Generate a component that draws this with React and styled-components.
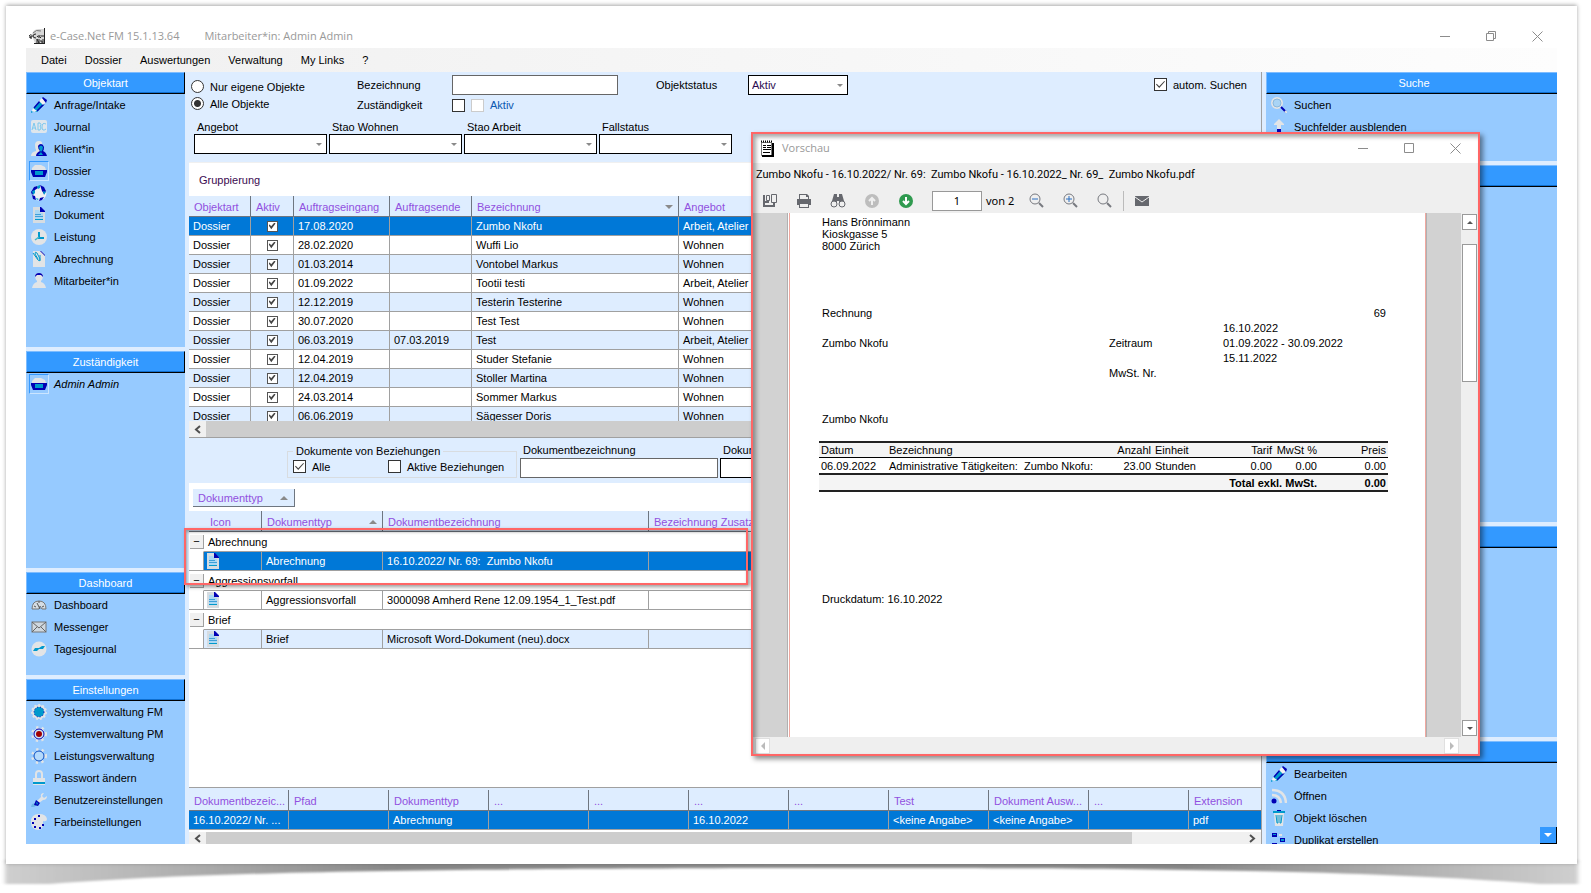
import React from "react"
import styled, { createGlobalStyle, css } from "styled-components"

const navy = "#0000b4"
const teal = "#0099cc"
const pale = "#e2e4e6"

const ICONS = {
  pencil: (
    <>
      <path d="M2 12l7-8 4 4-7 7-4 0z" fill={teal} />
      <path d="M3 11l6-7M6 14l7-7" stroke={navy} strokeWidth="1.5" />
      <path d="M8 4l3-3 4 4-3 3z" fill="#f2f2f2" />
      <path d="M11 1l1-1 4 3-1 3z" fill={navy} />
      <path d="M2 11l-1 3 2 1 3-1z" fill="#f2f2f2" />
      <path d="M0 16v-2l2 1z" fill={teal} />
    </>
  ),
  abc: (
    <>
      <rect x="0" y="1" width="16" height="13" rx="2" fill="#dfe6ec" />
      <path
        d="M1 11l2-7 2 7M2 9h2M7 4v7h2q2-2 0-4q2-1 0-3zM15 5q-4-2-4 3t4 2"
        fill="none"
        stroke="#7cc8ee"
      />
    </>
  ),
  client: (
    <>
      <path d="M4 4q0-4 4-4t3 4q0 3-2 5v2l1 4H0q0-4 5-5V9Q4 7 4 4z" fill={pale} />
      <path d="M7 5q1-2 3-2t3 3q0 3-1 4 3 1 4 5H5q0-3 4-5-2-2-2-5z" fill={navy} />
      <path d="M8 6q2-3 4 0 0 3-2 5-2-2-2-5zM7 14l3-3 2 3z" fill={teal} />
    </>
  ),
  folder: (
    <>
      <path d="M1 7V5l3-3h6l4 2 1 3z" fill={pale} />
      <path d="M0 7h16v2l-2 5H2L0 9z" fill={navy} />
      <path d="M4 8h8v4H4z" fill={teal} />
    </>
  ),
  globe: (
    <>
      <circle cx="8" cy="8" r="7.5" fill="#eef0f2" />
      <path d="M3 2l3-1 1 2-3 2-1 3-2 2-1-3zM9 0l4 2 2 4-2 3-2-3-1-3zM1 10l3 1 1 4-3-1zM9 13l4-1-2 3-3 1z" fill={navy} />
      <path d="M6 1l3-1v3L7 4zM1 6l3-1v3l-2 2zM12 6l3 1-2 3zM5 13l3 1-2 1z" fill={teal} />
    </>
  ),
  doc: (
    <>
      <path d="M2 0h7l5 4v12H2z" fill="#d6dce1" />
      <path d="M4 3h4l2 3h2v6H4z" fill="#a9d8f4" />
      <path d="M9 0h1l4 4v1H9z" fill={navy} />
      <path d="M4 7.500h6M4 9.500h8" stroke="#3f9fd8" />
      <path d="M4 12.500h8" stroke={teal} />
    </>
  ),
  clock: (
    <>
      <circle cx="8" cy="8" r="8" fill={pale} />
      <path d="M8 3v6h5" stroke={teal} strokeWidth="2" fill="none" />
      <path d="M4 11l4-3" stroke="#40b8c8" strokeWidth="1.5" />
    </>
  ),
  clip: (
    <>
      <path d="M2 0h8l4 4v12H2z" fill={pale} />
      <path d="M9 0h1l4 4v1z" fill={navy} />
      <path
        d="M2 2l5 7q2 2 2-1L6 2Q4 0 4 3l3 5M9 10V4"
        fill="none"
        stroke={teal}
      />
    </>
  ),
  person: (
    <>
      <path d="M4 3q0-3 4-3t4 3q0 3-2 5v1q4 1 5 6H1q1-5 5-6V8Q4 6 4 3z" fill={pale} />
      <path d="M4 4q0-4 4-4t4 4l-2-2H6z" fill={navy} />
    </>
  ),
  gauge: (
    <>
      <path d="M1 12q0-8 7-8t7 8h-4l-2-3-1 3z" fill="#d5dde4" stroke="#777" />
      <path d="M9 12L6 6M3 9l2 1M8 4v2M13 9l-2 1" stroke="#555" fill="none" />
    </>
  ),
  mail: (
    <>
      <rect x="1" y="3" width="14" height="10" fill="#cfd8df" stroke="#777" />
      <path d="M1 3l7 6 7-6M1 13l5-5M15 13l-5-5" stroke="#666" fill="none" />
    </>
  ),
  daily: (
    <>
      <circle cx="8" cy="8" r="7.5" fill={pale} />
      <path d="M2 10l2-3h4l3-2h3l-2 3H8l-2 2z" fill={teal} />
    </>
  ),
  gearFull: (
    <>
      <circle cx="8" cy="8" r="7" fill={pale} stroke={pale} strokeWidth="2" strokeDasharray="2 2" />
      <circle cx="8" cy="8" r="5" fill={teal} stroke={navy} strokeDasharray="1 2" />
    </>
  ),
  gearRed: (
    <>
      <circle cx="8" cy="8" r="6" fill={pale} stroke={pale} strokeWidth="4" strokeDasharray="2 3" />
      <circle cx="8" cy="8" r="5" fill="#cfe6f6" stroke={navy} />
      <circle cx="8" cy="8" r="3" fill="#a00000" />
    </>
  ),
  gearOpen: (
    <>
      <circle cx="8" cy="8" r="6" fill="none" stroke={pale} strokeWidth="4" strokeDasharray="2 3" />
      <circle cx="8" cy="8" r="5" fill="#b5dafc" stroke="#0a4cc0" />
    </>
  ),
  lock: (
    <>
      <path d="M5 8V4q0-3 3-3t3 3v4" fill="none" stroke={pale} strokeWidth="2" />
      <path d="M2 8h12v7H2z" fill={pale} />
      <path d="M2 12h12v2H2z" fill={teal} />
    </>
  ),
  wrench: (
    <>
      <path d="M6 9l4-4q-1-4 3-4l-2 3 2 2 3-2q0 4-4 4l-4 3z" fill={pale} />
      <path d="M0 15l1-3 3-1 2 2-3 2z" fill="#6fb6e6" />
      <path d="M5 8l4 3-2 3-4-1z" fill={navy} />
      <path d="M5 10l2 1-1 2z" fill={teal} />
    </>
  ),
  palette: (
    <>
      <path d="M8 0q7 0 8 5 0 3-4 2 1 8-4 9-8 0-8-8t8-8z" fill={pale} />
      <path d="M3 4h2v2H3zM1 8h2v2H1zM3 12h2v2H3zM8 13h2v2H8zM7 1h2v2H7zM11 10h2v2h-2z" fill={navy} />
    </>
  ),
  search: (
    <>
      <circle cx="6" cy="6" r="5" fill="#a9d4f5" stroke={pale} strokeWidth="2" />
      <circle cx="6" cy="6" r="4" fill="none" stroke="#8bb8dc" />
      <path d="M10 10l5 5" stroke={navy} strokeWidth="2" />
      <path d="M14 14l2 2" stroke={pale} strokeWidth="2" />
    </>
  ),
  up: (
    <>
      <path d="M8 0l5 5v1h-3v4H6V6H3V5z" fill={pale} />
      <path d="M6 10h4v4H6z" fill={navy} />
    </>
  ),
  feed: (
    <>
      <path d="M1 2q13 0 14 13M1 7q8 0 9 8" fill="none" stroke={pale} strokeWidth="2.500" />
      <circle cx="3" cy="13" r="2.5" fill={navy} />
    </>
  ),
  trash: (
    <>
      <path d="M2 2h12" stroke={teal} strokeWidth="2" />
      <path d="M6 0h4v1H6z" fill={navy} />
      <path d="M3 3h10l-1 13H4z" fill={pale} />
      <path d="M5 5l1 8h1V5M11 5l-1 8H9V5" stroke={teal} fill="none" />
    </>
  ),
  nodes: (
    <>
      <path d="M1 1h5v4H1zM9 6h5v4H9zM1 11h5v4H1z" fill={navy} />
      <path d="M2 2h3v1H2zM10 7h3v2h-3zM2 12h3v2H2z" fill={teal} />
      <path d="M8 3h3M8 13h3" stroke={pale} strokeWidth="2" />
    </>
  ),
}

const Icon = ({ name, size = 16 }) => (
  <svg width={size} height={size} viewBox="0 0 16 16" aria-hidden="true">
    {ICONS[name]}
  </svg>
)

const Triangle = ({ up, color = "#8a8a8a", w = 8 }) => (
  <svg width={w} height={w / 2} viewBox="0 0 8 4" aria-hidden="true">
    <path d={up ? "M0 4l4-4 4 4z" : "M0 0l4 4 4-4z"} fill={color} />
  </svg>
)

const Chevron = ({ right }) => (
  <svg width="7" height="9" viewBox="0 0 7 9" aria-hidden="true">
    <path
      d={right ? "M1 1l4 3.5L1 8" : "M6 1L2 4.5 6 8"}
      fill="none"
      stroke="#505050"
      strokeWidth="2"
    />
  </svg>
)

const Controls = ({ restore }) => (
  <ControlRow>
    <PlainButton aria-label="Minimieren">
      <svg width="11" height="11">
        <path d="M0 5.5h10" stroke="#8c8c8c" />
      </svg>
    </PlainButton>
    <PlainButton aria-label="Maximieren">
      <svg width="11" height="11" fill="none" stroke="#8c8c8c">
        {restore ? (
          <path d="M.5 2.5h7v7h-7zM2.5 2.5v-2h7v7h-2" />
        ) : (
          <path d="M.5 .5h9v9h-9z" />
        )}
      </svg>
    </PlainButton>
    <PlainButton aria-label="Schliessen">
      <svg width="11" height="11">
        <path d="M.5 .5l10 10M10.5 .5l-10 10" stroke="#8c8c8c" />
      </svg>
    </PlainButton>
  </ControlRow>
)

const Dropdown = ({ label, value = "", hideLabel }) => (
  <Field>
    {!hideLabel && <span>{label}</span>}
    <SelectBox>
      <select aria-label={label} defaultValue={value}>
        <option>{value}</option>
      </select>
      <Triangle w={6} />
    </SelectBox>
  </Field>
)

const Section = ({ title, items = [], height, open }) => (
  <Panel $height={height}>
    <PanelTitle $open={open}>{title}</PanelTitle>
    {items.map(([icon, text, active, italic]) => (
      <PanelItem key={text} $italic={italic}>
        <IconFrame $active={active}>
          <Icon name={icon} />
        </IconFrame>
        {text}
      </PanelItem>
    ))}
  </Panel>
)

const MENU = ["Datei", "Dossier", "Auswertungen", "Verwaltung", "My Links", "?"]

const OBJEKTART = [
  ["pencil", "Anfrage/Intake"],
  ["abc", "Journal"],
  ["client", "Klient*in"],
  ["folder", "Dossier", true],
  ["globe", "Adresse"],
  ["doc", "Dokument"],
  ["clock", "Leistung"],
  ["clip", "Abrechnung"],
  ["person", "Mitarbeiter*in"],
]
const DASHBOARD = [
  ["gauge", "Dashboard"],
  ["mail", "Messenger"],
  ["daily", "Tagesjournal"],
]
const SETTINGS = [
  ["gearFull", "Systemverwaltung FM"],
  ["gearRed", "Systemverwaltung PM"],
  ["gearOpen", "Leistungsverwaltung"],
  ["lock", "Passwort ändern"],
  ["wrench", "Benutzereinstellungen"],
  ["palette", "Farbeinstellungen"],
]
const SEARCH = [
  ["search", "Suchen"],
  ["up", "Suchfelder ausblenden"],
]
const ACTIONS = [
  ["pencil", "Bearbeiten"],
  ["feed", "Öffnen"],
  ["trash", "Objekt löschen"],
  ["nodes", "Duplikat erstellen"],
]

const DOSSIERS = [
  ["17.08.2020", "", "Zumbo Nkofu", "Arbeit, Atelier"],
  ["28.02.2020", "", "Wuffi Lio", "Wohnen"],
  ["01.03.2014", "", "Vontobel Markus", "Wohnen"],
  ["01.09.2022", "", "Tootii testi", "Arbeit, Atelier"],
  ["12.12.2019", "", "Testerin Testerine", "Wohnen"],
  ["30.07.2020", "", "Test Test", "Wohnen"],
  ["06.03.2019", "07.03.2019", "Test", "Arbeit, Atelier"],
  ["12.04.2019", "", "Studer Stefanie", "Wohnen"],
  ["12.04.2019", "", "Stoller Martina", "Wohnen"],
  ["24.03.2014", "", "Sommer Markus", "Wohnen"],
  ["06.06.2019", "", "Sägesser Doris", "Wohnen"],
]

const DOCUMENTS = [
  ["Abrechnung", "16.10.2022/ Nr. 69:  Zumbo Nkofu", "selected"],
  ["Aggressionsvorfall", "3000098 Amherd Rene 12.09.1954_1_Test.pdf"],
  ["Brief", "Microsoft Word-Dokument (neu).docx", "odd"],
]

const PROPERTIES = [
  ["Dokumentbezeic...", "16.10.2022/ Nr. ..."],
  ["Pfad", ""],
  ["Dokumenttyp", "Abrechnung"],
  ["...", ""],
  ["...", ""],
  ["...", "16.10.2022"],
  ["...", ""],
  ["Test", "<keine Angabe>"],
  ["Dokument Ausw...", "<keine Angabe>"],
  ["...", ""],
  ["Extension", "pdf"],
]

const Cols = ({ widths }) => (
  <colgroup>
    {widths.map((w, i) => (
      <col key={i} width={w || undefined} />
    ))}
  </colgroup>
)

const SearchPanel = () => (
  <Search>
    <SearchTop>
      <RadioColumn>
        <Choice>
          <Radio name="scope" />
          Nur eigene Objekte
        </Choice>
        <Choice>
          <Radio name="scope" defaultChecked />
          Alle Objekte
        </Choice>
      </RadioColumn>
      <LabelColumn>
        <label htmlFor="bezeichnung">Bezeichnung</label>
        <label htmlFor="zustaendig">Zuständigkeit</label>
      </LabelColumn>
      <InputColumn>
        <TextBox id="bezeichnung" />
        <CheckPair>
          <Check id="zustaendig" />
          <Choice $blue>
            <Check disabled />
            Aktiv
          </Choice>
        </CheckPair>
      </InputColumn>
      <StatusLabel>Objektstatus</StatusLabel>
      <StatusBox>
        <Dropdown label="Objektstatus" value="Aktiv" hideLabel />
      </StatusBox>
      <AutoSearch>
        <Check defaultChecked />
        autom. Suchen
      </AutoSearch>
    </SearchTop>
    <FilterRow>
      <Dropdown label="Angebot" />
      <Dropdown label="Stao Wohnen" />
      <Dropdown label="Stao Arbeit" />
      <Dropdown label="Fallstatus" />
    </FilterRow>
  </Search>
)

const DossierGrid = () => (
  <>
    <GroupBar>Gruppierung</GroupBar>
    <GridClip>
      <Grid>
        <Cols widths={[62, 43, 96, 82, 207, 0]} />
        <thead>
          <tr>
            <th>Objektart</th>
            <th>Aktiv</th>
            <th>Auftragseingang</th>
            <th>Auftragsende</th>
            <th>
              <HeadFlex>
                Bezeichnung <Triangle />
              </HeadFlex>
            </th>
            <th>Angebot</th>
          </tr>
        </thead>
        <tbody>
          {DOSSIERS.map(([start, end, name, offer], i) => (
            <GridRow key={name} $selected={i === 0} $odd={i % 2 === 0}>
              <td>Dossier</td>
              <CenterCell>
                <Check $small defaultChecked aria-label={`Aktiv ${name}`} />
              </CenterCell>
              <td>{start}</td>
              <td>{end}</td>
              <td>{name}</td>
              <td>{offer}</td>
            </GridRow>
          ))}
        </tbody>
      </Grid>
    </GridClip>
    <ScrollBar $line>
      <PlainButton aria-label="Nach links">
        <Chevron />
      </PlainButton>
      <ScrollThumb />
    </ScrollBar>
  </>
)

const DocumentFilter = () => (
  <DocFilter>
    <Relations>
      <legend>Dokumente von Beziehungen</legend>
      <Choice>
        <Check defaultChecked />
        Alle
      </Choice>
      <Choice>
        <Check />
        Aktive Beziehungen
      </Choice>
    </Relations>
    <NameField>
      <span>Dokumentbezeichnung</span>
      <TextBox />
    </NameField>
    <TypeField>
      <Dropdown label="Dokumenttyp" />
    </TypeField>
  </DocFilter>
)

const DocumentGrid = () => (
  <DocArea>
    <GroupChipBar>
      <GroupChip>
        Dokumenttyp <Triangle up />
      </GroupChip>
    </GroupChipBar>
    <Grid>
      <Cols widths={[15, 58, 121, 266, 0]} />
      <thead>
        <tr>
          <IconHead colSpan={2}>Icon</IconHead>
          <th>
            <HeadFlex>
              Dokumenttyp <Triangle up />
            </HeadFlex>
          </th>
          <th>Dokumentbezeichnung</th>
          <th>Bezeichnung Zusatz</th>
        </tr>
      </thead>
      {DOCUMENTS.map(([type, name, state]) => (
        <tbody key={type}>
          <tr>
            <GroupCell colSpan={5}>
              <GroupFlex>
                <Collapse aria-label={`${type} zuklappen`}>−</Collapse>
                {type}
              </GroupFlex>
            </GroupCell>
          </tr>
          <DocRow $selected={state === "selected"} $odd={state === "odd"}>
            <td />
            <IconCell>
              <Icon name="doc" />
            </IconCell>
            <td>{type}</td>
            <td>{name}</td>
            <td />
          </DocRow>
        </tbody>
      ))}
    </Grid>
  </DocArea>
)

const PropertyGrid = () => (
  <PropArea>
    <Grid>
      <Cols widths={[100, 100, 100, 100, 100, 100, 100, 100, 100, 100, 0]} />
      <thead>
        <tr>
          {PROPERTIES.map(([head], i) => (
            <th key={i}>{head}</th>
          ))}
        </tr>
      </thead>
      <tbody>
        <GridRow $selected>
          {PROPERTIES.map(([, value], i) => (
            <td key={i}>{value}</td>
          ))}
        </GridRow>
      </tbody>
    </Grid>
    <ScrollBar $short>
      <PlainButton aria-label="Nach links">
        <Chevron />
      </PlainButton>
      <ScrollThumb />
      <ScrollRest />
      <PlainButton aria-label="Nach rechts">
        <Chevron right />
      </PlainButton>
    </ScrollBar>
  </PropArea>
)

const Lens = ({ children }) => (
  <svg width="16" height="16" fill="none" stroke="#77797f">
    <circle cx="6" cy="6" r="5" />
    <path d="M10 10l4 4" strokeWidth="2" />
    {children}
  </svg>
)

const PreviewToolbar = () => (
  <Toolbar>
    <PlainButton aria-label="Seitenleiste">
      <svg width="16" height="16" fill="none" stroke="#66686e">
        <path d="M2 2v11h10v-3" strokeWidth="2" />
        <path d="M4.5 2.5h3v5h-3zM9.5 1.5h5v8h-5z" />
        <path d="M1 9h6" strokeWidth="2" />
      </svg>
    </PlainButton>
    <PlainButton aria-label="Drucken">
      <svg width="16" height="16" fill="#66686e">
        <path d="M3 1h8l2 2v3h-1V4h-2V2H4v4H3z" />
        <path d="M1 6h14v6h-2V9H3v3H1z" />
        <path d="M3 9h10v6H3zm1 2v3h8v-3z" fillRule="evenodd" />
      </svg>
    </PlainButton>
    <PlainButton aria-label="Suchen">
      <svg width="16" height="16" fill="#66686e">
        <path d="M4 1h3v3h2V1h3l2 7q1 2 0 4H9V8H7v4H2q-1-2 0-4z" />
        <circle cx="4" cy="11" r="3" fill="#efefef" stroke="#66686e" />
        <circle cx="12" cy="11" r="3" fill="#efefef" stroke="#66686e" />
      </svg>
    </PlainButton>
    <PlainButton aria-label="Vorherige Seite">
      <svg width="16" height="16">
        <circle cx="8" cy="8" r="7" fill="#bdbdbd" />
        <path d="M8 12V5M5 8l3-3 3 3" stroke="#efefef" strokeWidth="2" fill="none" />
      </svg>
    </PlainButton>
    <PlainButton aria-label="Nächste Seite">
      <svg width="16" height="16">
        <circle cx="8" cy="8" r="7" fill="#2f9a4f" />
        <path d="M8 4v7M5 8l3 3 3-3" stroke="#fff" strokeWidth="2" fill="none" />
      </svg>
    </PlainButton>
    <PageNumber aria-label="Seite" defaultValue="1" />
    <PageCount>von 2</PageCount>
    <PlainButton aria-label="Verkleinern">
      <Lens>
        <path d="M3 6h6" stroke="#2a6fc0" />
      </Lens>
    </PlainButton>
    <PlainButton aria-label="Vergrössern">
      <Lens>
        <path d="M3 6h6M6 3v6" stroke="#2a6fc0" />
      </Lens>
    </PlainButton>
    <PlainButton aria-label="Zoom">
      <Lens />
    </PlainButton>
    <Divider />
    <PlainButton aria-label="Senden">
      <svg width="16" height="16">
        <path d="M1 3h14v10H1z" fill="#66686e" />
        <path d="M1 4l7 5 7-5" stroke="#efefef" fill="none" />
      </svg>
    </PlainButton>
  </Toolbar>
)

const Invoice = () => (
  <Sheet>
    <address>
      Hans Brönnimann
      <br />
      Kioskgasse 5
      <br />
      8000 Zürich
    </address>
    <Meta>
      <span>Rechnung</span>
      <span />
      <RightText>69</RightText>
      <span />
      <span />
      <span>16.10.2022</span>
      <span>Zumbo Nkofu</span>
      <span>Zeitraum</span>
      <span>01.09.2022 - 30.09.2022</span>
      <span />
      <span />
      <span>15.11.2022</span>
      <span />
      <span>MwSt. Nr.</span>
    </Meta>
    <SheetLine>Zumbo Nkofu</SheetLine>
    <InvoiceTable>
      <Cols widths={[68, 0, 46, 67, 54, 45, 69]} />
      <thead>
        <tr>
          <th>Datum</th>
          <th>Bezeichnung</th>
          <NumHead>Anzahl</NumHead>
          <th>Einheit</th>
          <NumHead>Tarif</NumHead>
          <NumHead>MwSt %</NumHead>
          <NumHead>Preis</NumHead>
        </tr>
      </thead>
      <tbody>
        <tr>
          <td>06.09.2022</td>
          <td>Administrative Tätigkeiten:&nbsp; Zumbo Nkofu:</td>
          <NumCell>23.00</NumCell>
          <td>Stunden</td>
          <NumCell>0.00</NumCell>
          <NumCell>0.00</NumCell>
          <NumCell>0.00</NumCell>
        </tr>
      </tbody>
      <tfoot>
        <tr>
          <NumCell colSpan={6}>Total exkl. MwSt.</NumCell>
          <NumCell>0.00</NumCell>
        </tr>
      </tfoot>
    </InvoiceTable>
    <PrintDate>Druckdatum: 16.10.2022</PrintDate>
  </Sheet>
)

const Preview = () => (
  <PreviewWindow>
    <PreviewTitle>
      <svg width="14" height="17" viewBox="0 0 14 17">
        <path d="M1.5 2.5h10v13h-10z" fill="#fff" stroke="#777" />
        <path d="M13 3v13H2" stroke="#000" strokeWidth="2" fill="none" />
        <path d="M1 1.5h12" stroke="#000" strokeWidth="2" strokeDasharray="1 1" />
        <path d="M3 5.5h3M7 5.500h4M3 7.5h3M7 7.500h4M3 9.5h8M3 12.500h7" stroke="#000" />
      </svg>
      Vorschau
      <Controls />
    </PreviewTitle>
    <FilePath>
      Zumbo Nkofu - 16.10.2022/ Nr. 69:&nbsp; Zumbo Nkofu - 16.10.2022_ Nr.
      69_&nbsp; Zumbo Nkofu.pdf
    </FilePath>
    <PreviewToolbar />
    <Viewer>
      <SheetArea>
        <Invoice />
      </SheetArea>
      <VerticalBar>
        <ArrowButton aria-label="Nach oben">
          <Triangle up w={6} color="#555" />
        </ArrowButton>
        <VerticalThumb />
        <ArrowButton aria-label="Nach unten">
          <Triangle w={6} color="#555" />
        </ArrowButton>
      </VerticalBar>
    </Viewer>
    <HorizontalBar>
      <ArrowButton $off aria-label="Nach links">
        <svg width="4" height="8">
          <path d="M4 0v8L0 4z" fill="#bbb" />
        </svg>
      </ArrowButton>
      <ArrowButton $off aria-label="Nach rechts">
        <svg width="4" height="8">
          <path d="M0 0v8l4-4z" fill="#bbb" />
        </svg>
      </ArrowButton>
    </HorizontalBar>
  </PreviewWindow>
)

const App = () => (
  <Desk>
    <GlobalStyle />
    <Paper>
      <TitleBar>
        <svg width="16" height="16" viewBox="0 0 16 16">
          <path d="M3 8q0-7 7-7h5v14H6z" fill="#d6d6d6" />
          <path d="M15.5 0v16M5 15.500h11" stroke="#222" />
          <path d="M4 5q3-4 8-2" stroke="#777" fill="none" />
          <path d="M0 9h2M0 8q3-3 3 1H1q0 2 2 1M7 6q-3 0-3 2t3 2M8 9q2-3 2 1M11 7q-1 2 1 3M12 8h3M8 11v4M8 11l2 4v-4M11 13h2v2M14 11v4" stroke="#222" fill="none" />
        </svg>
        <span>e-Case.Net FM 15.1.13.64</span>
        <UserName>Mitarbeiter*in: Admin Admin</UserName>
        <Controls restore />
      </TitleBar>
      <MenuBar>
        {MENU.map((item) => (
          <MenuButton key={item}>{item}</MenuButton>
        ))}
      </MenuBar>
      <Body>
        <Side>
          <Section title="Objektart" items={OBJEKTART} height="275px" />
          <Section
            title="Zuständigkeit"
            items={[["folder", "Admin Admin", true, true]]}
            height="217px"
          />
          <Section title="Dashboard" items={DASHBOARD} height="103px" />
          <Section title="Einstellungen" items={SETTINGS} />
        </Side>
        <Main>
          <SearchPanel />
          <DossierGrid />
          <DocumentFilter />
          <DocumentGrid />
          <PropertyGrid />
        </Main>
        <Side>
          <Section title="Suche" items={SEARCH} height="89px" open />
          <Section height="357px" open />
          <Section height="211px" open />
          <Section items={ACTIONS} open />
          <MoreButton aria-label="Mehr">
            <Triangle color="#fff" />
          </MoreButton>
        </Side>
        <Highlight />
        <Preview />
      </Body>
    </Paper>
    <PaperShadow viewBox="0 0 1591 29" preserveAspectRatio="none">
      <defs>
        <linearGradient id="curl">
          <stop offset="0" stopColor="#cfcfcf" />
          <stop offset=".08" stopColor="#b8b8b8" />
          <stop offset=".25" stopColor="#888" />
          <stop offset=".5" stopColor="#8c8c8c" />
          <stop offset=".75" stopColor="#888" />
          <stop offset=".92" stopColor="#b8b8b8" />
          <stop offset="1" stopColor="#cfcfcf" />
        </linearGradient>
        <filter id="soft">
          <feGaussianBlur stdDeviation="2 1" />
        </filter>
      </defs>
      <path
        d="M5-4V20H50C200 8 400 5 795 4S1390 8 1540 20H1578V-4z"
        fill="url(#curl)"
        filter="url(#soft)"
      />
    </PaperShadow>
  </Desk>
)

export default App

const GlobalStyle = createGlobalStyle`
  * {
    box-sizing: border-box;
  }
  body {
    margin: 0;
    background: #fff;
    color: #000;
    font: 11px/16px "Liberation Sans", Arial, sans-serif;
  }
  button, input, select {
    margin: 0;
    padding: 0;
    font: inherit;
    color: inherit;
    border-radius: 0;
  }
  svg {
    display: block;
    flex: none;
  }
`

const Desk = styled.div`
  display: flex;
  flex-direction: column;
  height: 100vh;
  min-height: 860px;
  overflow: hidden;
`

const Paper = styled.div`
  position: relative;
  z-index: 1;
  flex: 1;
  min-height: 0;
  display: flex;
  flex-direction: column;
  margin: 6px 14px 0 6px;
  padding: 18px 20px 20px;
  background: #fff;
  box-shadow: 0 -1px 4px rgba(0, 0, 0, 0.35);
`

const PaperShadow = styled.svg`
  width: 100%;
  height: 29px;
  overflow: visible;
`

const PlainButton = styled.button`
  display: flex;
  align-items: center;
  justify-content: center;
  border: 0;
  background: none;
`

const ControlRow = styled.div`
  display: flex;
  gap: 35px;
  margin-left: auto;
`

const TitleBar = styled.header`
  display: flex;
  align-items: center;
  flex: none;
  height: 24px;
  gap: 5px;
  padding: 0 14px 0 3px;
  color: #999;
  font: 11px/16px "Open Sans", sans-serif;
`

const UserName = styled.span`
  margin-left: 20px;
`

const MenuBar = styled.nav`
  display: flex;
  flex: none;
  height: 24px;
  padding-left: 6px;
  background: linear-gradient(90deg, #f0f0f0, #fdfdfd);
`

const MenuButton = styled(PlainButton)`
  padding: 0 9px;
`

const Body = styled.div`
  position: relative;
  flex: 1;
  min-height: 0;
  display: grid;
  grid-template-columns: 159px minmax(0, 1fr) 291px;
  grid-template-rows: minmax(0, 1fr);
  gap: 4px;
  background: #deedff;
`

const Side = styled.aside`
  position: relative;
  display: flex;
  flex-direction: column;
  gap: 4px;
  overflow: hidden;
`

const Panel = styled.section`
  flex: ${(p) => (p.$height ? `0 0 ${p.$height}` : "1 1 0")};
  min-height: 0;
  overflow: hidden;
  background: #96caff;
`

const PanelTitle = styled.h2`
  height: 22px;
  margin: 0;
  padding-left: ${(p) => (p.$open ? "4px" : 0)};
  border: 1px solid #000;
  border-width: 1px ${(p) => (p.$open ? 0 : "1px")} 1px 1px;
  border-top-color: #7dbcff;
  border-left-color: #7dbcff;
  background: #3399ff;
  box-shadow: inset 0 -1px #0f6fd0;
  color: #fff;
  font-size: inherit;
  font-weight: 400;
  line-height: 20px;
  text-align: center;
`

const PanelItem = styled.button`
  display: flex;
  align-items: center;
  gap: 5px;
  width: 100%;
  height: 22px;
  padding-left: 3px;
  border: 0;
  background: none;
  font-style: ${(p) => (p.$italic ? "italic" : "normal")};
`

const IconFrame = styled.span`
  display: flex;
  padding: 1px;
  border: 1px solid transparent;
  ${(p) =>
    p.$active &&
    css`
      border-color: #3399ff #cbe5ff #cbe5ff #3399ff;
    `}
`

const MoreButton = styled(PlainButton)`
  position: absolute;
  right: 0;
  bottom: 0;
  width: 17px;
  height: 17px;
  border-right: 1px solid #000;
  border-bottom: 1px solid #000;
  background: #3399ff;
`

const Main = styled.main`
  display: flex;
  flex-direction: column;
  min-height: 0;
  overflow: hidden;
  background: #fff;
  border-right: 1px solid #a0a0a0;
`

const Search = styled.section`
  flex: none;
  padding: 3px 0 8px;
  background: #deedff;
  border-bottom: 1px solid #f0f0f0;
`

const SearchTop = styled.div`
  display: flex;
  height: 46px;
  padding-left: 2px;
`

const RadioColumn = styled.div`
  width: 166px;
  padding-top: 3px;
`

const Choice = styled.label`
  display: flex;
  align-items: center;
  gap: 6px;
  height: 17px;
  color: ${(p) => (p.$blue ? "#0a58b0" : "inherit")};
`

const Radio = styled.input.attrs({ type: "radio" })`
  appearance: none;
  width: 13px;
  height: 13px;
  border: 1px solid #333;
  border-radius: 50%;
  background: #fff;

  &:checked {
    background: radial-gradient(#333 3px, #fff 4px);
  }
`

const Check = styled.input.attrs({ type: "checkbox" })`
  appearance: none;
  position: relative;
  flex: none;
  width: ${(p) => (p.$small ? "11px" : "13px")};
  height: ${(p) => (p.$small ? "11px" : "13px")};
  border: 1px solid ${(p) => (p.$small ? "#555" : "#333")};
  background: #fff;

  &:disabled {
    border-color: #ccc;
  }
  &:checked::after {
    content: "";
    position: absolute;
    inset: 1px;
    background: #444;
    clip-path: ${(p) =>
      p.$small
        ? "polygon(0 40%, 18% 30%, 38% 55%, 85% 0, 100% 15%, 40% 95%)"
        : "polygon(0 50%, 8% 42%, 36% 70%, 92% 10%, 100% 18%, 36% 88%)"};
  }
`

const LabelColumn = styled.div`
  display: flex;
  flex-direction: column;
  width: 95px;
  line-height: 20px;
`

const InputColumn = styled.div`
  display: flex;
  flex-direction: column;
  width: 166px;
`

const CheckPair = styled.div`
  display: flex;
  align-items: center;
  gap: 6px;
  height: 18px;
  margin-top: 1px;
`

const TextBox = styled.input`
  width: 100%;
  height: 20px;
  padding: 0 4px;
  border: 1px solid #666;
  background: #fff;
`

const StatusLabel = styled.span`
  width: 130px;
  padding-left: 38px;
  line-height: 20px;
`

const StatusBox = styled.div`
  width: 100px;
`

const AutoSearch = styled(Choice)`
  width: 107px;
  margin-left: auto;
  height: 19px;
`

const FilterRow = styled.div`
  display: grid;
  grid-template-columns: repeat(4, 133px);
  gap: 2px;
  padding-left: 5px;
`

const Field = styled.label`
  display: block;

  > span {
    display: block;
    padding-left: 3px;
    line-height: 13px;
  }
`

const SelectBox = styled.div`
  position: relative;
  height: 20px;

  select {
    appearance: none;
    display: block;
    width: 100%;
    height: 20px;
    padding: 0 3px;
    border: 1px solid #000;
    background: #fff;
    color: #2b0a50;
  }
  svg {
    position: absolute;
    right: 5px;
    top: 9px;
  }
`

const GroupBar = styled.div`
  flex: none;
  height: 33px;
  padding-left: 10px;
  color: #3a0a50;
  line-height: 34px;
`

const GridClip = styled.div`
  flex: none;
  height: 225px;
  overflow: hidden;
`

const Grid = styled.table`
  width: 100%;
  table-layout: fixed;
  border-spacing: 0;

  th,
  td {
    height: 19px;
    padding: 0 4px;
    border-right: 1px solid #a0a0a0;
    border-bottom: 1px solid #a0a0a0;
    overflow: hidden;
    white-space: pre;
    text-align: left;
    font-weight: 400;
  }
  th {
    height: 21px;
    padding: 2px 5px 0;
    border-color: #6e7680;
    background: #deedff;
    color: #9150e0;
  }
  th:last-child,
  td:last-child {
    border-right: 0;
  }
`

const HeadFlex = styled.div`
  display: flex;
  align-items: center;
  justify-content: space-between;
`

const GridRow = styled.tr`
  background: ${(p) => (p.$selected ? "#0078d7" : p.$odd ? "#deedff" : "#fff")};
  color: ${(p) => (p.$selected ? "#fff" : "inherit")};
`

const CenterCell = styled.td`
  line-height: 0;

  input {
    display: block;
    margin: 0 auto;
  }
`

const ScrollBar = styled.div`
  display: flex;
  flex: none;
  height: ${(p) => (p.$short ? "12px" : "17px")};
  background: #f0f0f0;
  border-bottom: ${(p) => (p.$line ? "1px solid #a0a0a0" : 0)};

  button {
    width: 17px;
  }
`

const ScrollThumb = styled.div`
  flex: 1;
  background: #cdcdcd;
`

const ScrollRest = styled.div`
  width: 112px;
`

const DocFilter = styled.section`
  display: flex;
  flex: none;
  gap: 2px;
  height: 45px;
  padding: 5px 0 0 98px;
  background: #deedff;
`

const Relations = styled.fieldset`
  display: flex;
  flex: none;
  width: 230px;
  min-width: 0;
  height: 33px;
  margin: 2px 1px 0 0;
  padding: 0 0 0 5px;
  border: 1px solid #d8dce0;

  legend {
    padding: 0 3px;
    line-height: 13px;
  }
  label {
    flex: 0 0 95px;
    white-space: nowrap;
  }
`

const NameField = styled(Field)`
  width: 198px;
  > span {
    line-height: 15px;
  }
`

const TypeField = styled.div`
  width: 133px;
  span {
    line-height: 15px;
  }
`

const DocArea = styled.section`
  flex: 1;
  min-height: 0;
  border-bottom: 1px solid #a0a0a0;
`

const GroupChipBar = styled.div`
  height: 28px;
  padding: 6px 4px;
`

const GroupChip = styled.button`
  display: flex;
  align-items: center;
  justify-content: space-between;
  width: 102px;
  height: 18px;
  padding: 0 6px 0 5px;
  border: 0;
  border-right: 1px solid #6e7680;
  border-bottom: 1px solid #6e7680;
  background: #deedff;
  color: #9150e0;
`

const IconHead = styled.th`
  && {
    padding-left: 21px;
  }
`

const IconCell = styled.td`
  && {
    padding: 0 1px;
  }
`

const GroupCell = styled.td`
  && {
    border: 0;
    padding: 0 1px;
  }
`

const GroupFlex = styled.div`
  display: flex;
  align-items: center;
  gap: 4px;
`

const Collapse = styled.button`
  width: 14px;
  height: 14px;
  border: 0;
  border-right: 1px solid #a0a0a0;
  border-bottom: 1px solid #a0a0a0;
  background: #f0f0f0;
  line-height: 12px;
`

const DocRow = styled.tr`
  color: ${(p) => (p.$selected ? "#fff" : "inherit")};

  && td {
    height: 20px;
    border-top: 1px solid #a0a0a0;
    background: ${(p) =>
      p.$selected ? "#0078d7" : p.$odd ? "#deedff" : "#fff"};
  }
  && td:first-child {
    border-top-color: transparent;
    background: #fff;
  }
`

/* callout around the chosen document, overlaps the side bar a little */
const Highlight = styled.div`
  position: absolute;
  top: 456px;
  left: 158px;
  width: 564px;
  height: 57px;
  border: 2px solid #ff6666;
  box-shadow: 2px 2px 4px rgba(0, 0, 0, 0.4),
    inset 1px 2px 3px rgba(0, 0, 0, 0.35);
`

const PropArea = styled.section`
  flex: none;
  border-top: 2px solid #deedff;

  table {
    margin-bottom: 2px;
  }
`

const PreviewWindow = styled.section`
  position: absolute;
  top: 60px;
  left: 725px;
  z-index: 2;
  display: flex;
  flex-direction: column;
  width: 729px;
  height: 624px;
  border: 2px solid #ff6666;
  background: #efefef;
  box-shadow: 3px 3px 5px rgba(0, 0, 0, 0.45);

  &::after {
    content: "";
    position: absolute;
    inset: 0;
    box-shadow: inset 3px 3px 4px rgba(0, 0, 0, 0.35);
    pointer-events: none;
  }
`

const PreviewTitle = styled.header`
  display: flex;
  align-items: center;
  gap: 8px;
  height: 29px;
  padding: 0 17px 1px 7px;
  background: #fff;
  color: #999;
  font: 11px/16px "Open Sans", sans-serif;
`

const FilePath = styled.div`
  height: 25px;
  padding-left: 3px;
  white-space: nowrap;
  font: 11px/24px Roboto, sans-serif;
`

const Toolbar = styled.div`
  display: flex;
  align-items: center;
  gap: 18px;
  height: 25px;
  padding: 0 9px;
  font: 11px/16px "Noto Sans", sans-serif;
`

const PageNumber = styled.input`
  width: 50px;
  height: 20px;
  border: 1px solid #999;
  background: #fff;
  text-align: center;
`

const PageCount = styled.span`
  width: 43px;
  margin-left: -14px;
  margin-right: -18px;
`

const Divider = styled.span`
  flex: none;
  width: 1px;
  height: 20px;
  margin: 0 -8px;
  background: #bbb;
`

const Viewer = styled.div`
  display: flex;
  flex: 1;
  min-height: 0;
`

const SheetArea = styled.div`
  flex: 1;
  padding: 0 34px;
  background: #d2d2d2;
`

const Sheet = styled.article`
  height: 100%;
  padding: 3px 38px 0 31px;
  border: solid #b0b0b0;
  border-width: 0 1px;
  background: #fff;
  box-shadow: inset 1px 0 #fff, inset 2px 0 #f0a8a0, inset -1px 0 #f0a8a0;
  line-height: 12px;

  address {
    padding-left: 3px;
    font-style: normal;
  }
`

const Meta = styled.div`
  display: grid;
  grid-template-columns: 287px 114px 1fr;
  grid-auto-rows: 15px;
  margin-top: 54px;
  padding: 0 2px 0 3px;
  line-height: 15px;
`

const RightText = styled.span`
  text-align: right;
`

const SheetLine = styled.p`
  margin: 31px 0 14px;
  padding-left: 3px;
  line-height: 15px;
`

const InvoiceTable = styled.table`
  width: 100%;
  table-layout: fixed;
  border-spacing: 0;
  border: solid #222;
  border-width: 2px 0;

  th,
  td {
    height: 15px;
    padding: 0 2px;
    text-align: left;
    font-weight: 400;
    white-space: nowrap;
  }
  th {
    background: #f4f4f4;
    border-bottom: 1px solid #000;
  }
  tfoot td {
    height: 17px;
    background: #f4f4f4;
    border-top: 2px solid #222;
    font-weight: 700;
  }
`

const NumHead = styled.th`
  && {
    text-align: right;
  }
`

const NumCell = styled.td`
  && {
    text-align: right;
  }
`

const PrintDate = styled.p`
  margin: 100px 0 0;
  padding-left: 3px;
  line-height: 15px;
`

const VerticalBar = styled.div`
  display: flex;
  flex-direction: column;
  width: 17px;
  padding: 1px;
`

const ArrowButton = styled(PlainButton)`
  width: 15px;
  height: 16px;
  border: 1px solid ${(p) => (p.$off ? "#e0e0e0" : "#999")};
  background: #fff;
`

const VerticalThumb = styled.div`
  height: 138px;
  margin: 14px 0 auto;
  border: 1px solid #999;
  background: #fff;
`

const HorizontalBar = styled.div`
  display: flex;
  justify-content: space-between;
  height: 17px;
  padding: 1px 19px 0 2px;
`
